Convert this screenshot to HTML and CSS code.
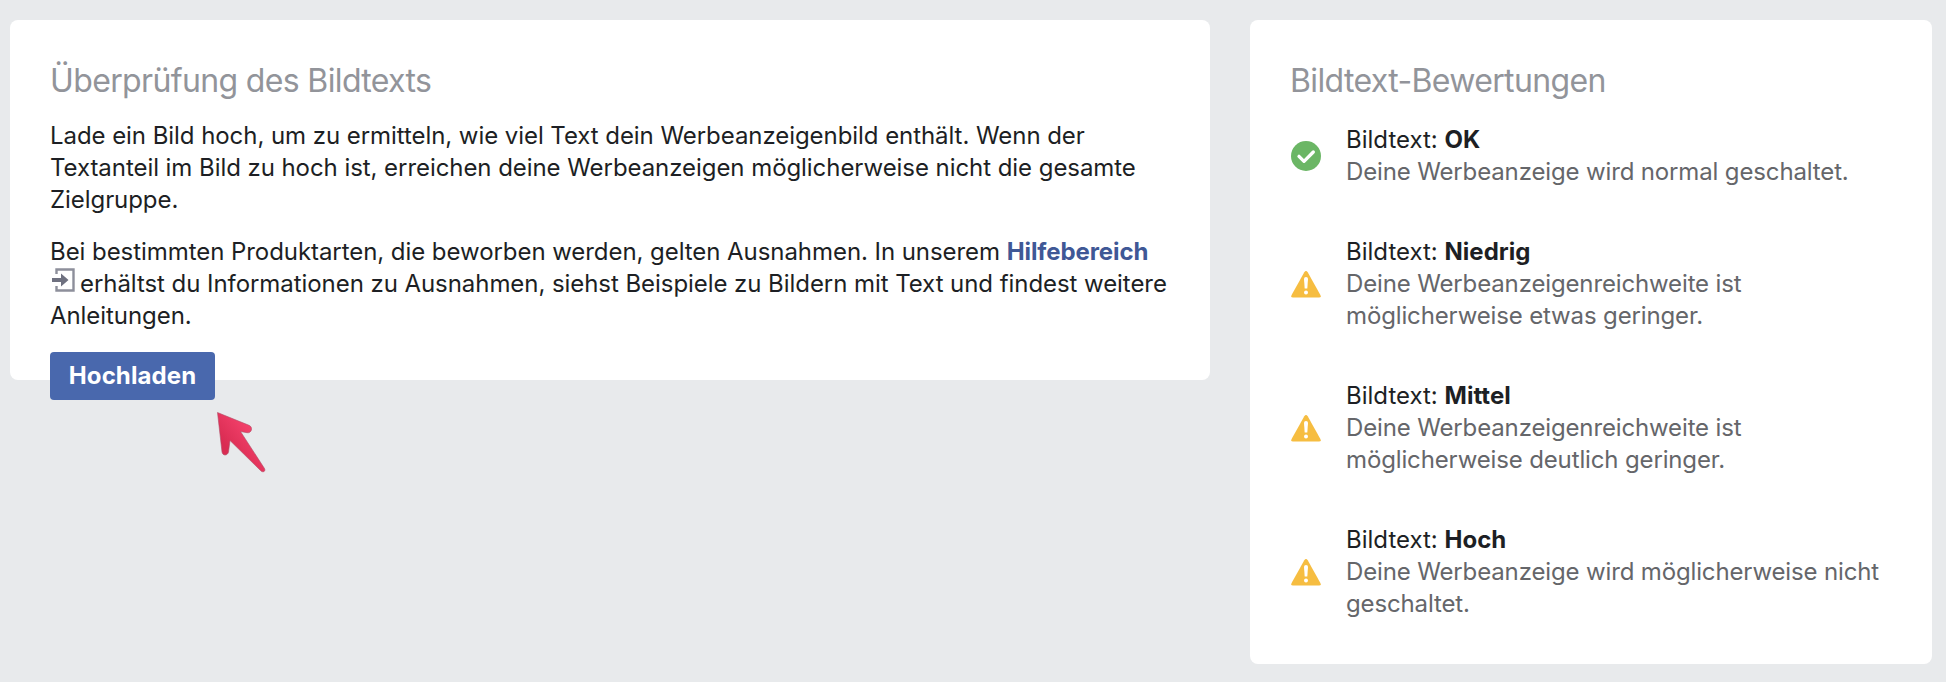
FILE: index.html
```
<!DOCTYPE html>
<html lang="de">
<head>
    <meta charset="UTF-8">
    <meta name="viewport" content="width=device-width, initial-scale=1.0">
    <title>Überprüfung des Bildtexts</title>
    <link rel="stylesheet" href="styles.css">
</head>
<body>

    <div class="container">
        <div class="card check">
            <h2>Überprüfung des Bildtexts</h2>
            <p>Lade ein Bild hoch, um zu ermitteln, wie viel Text dein Werbeanzeigenbild enthält. Wenn der<br>
            Textanteil im Bild zu hoch ist, erreichen deine Werbeanzeigen möglicherweise nicht die gesamte<br>
            Zielgruppe.</p>
            <p>Bei bestimmten Produktarten, die beworben werden, gelten Ausnahmen. In unserem <a href="#">Hilfebereich</a><br>
            <svg class="link-icon" viewBox="0 0 24 24"><path d="M5.5 6V1.5h17v21h-17V18" fill="none" stroke="#8d8f9b" stroke-width="2.4"/><path d="M1 10h9V5.500l7.500 6.500-7.500 6.500V14H1z" fill="#6f7180"/></svg>erhältst du Informationen zu Ausnahmen, siehst Beispiele zu Bildern mit Text und findest weitere<br>
            Anleitungen.</p>
            <button>Hochladen</button>
            <svg class="pointer" viewBox="0 0 50 62">
                <defs>
                    <linearGradient id="red" x1="0" y1="1" x2="1" y2="0">
                        <stop offset="0.3" stop-color="#d92c52"/>
                        <stop offset="0.7" stop-color="#f2406a"/>
                    </linearGradient>
                </defs>
                <path d="M1.500 1.500 33 14.300C37.500 16.200 35.500 22.500 31 21.700L24.500 20.500 48.500 57.500C50 60.500 46.500 62 44.500 59.500L14 29.500 12.500 41C11.500 45 6.500 45 6 41Z" fill="url(#red)" stroke="#b04c64" stroke-width="0.6"/>
            </svg>
        </div>

        <div class="card ratings">
            <h2>Bildtext-Bewertungen</h2>
            <div class="rating">
                <svg class="icon" viewBox="0 0 30 30"><circle cx="15" cy="15" r="15" fill="#6bb665"/><path d="M8 15.300l5 5L22.300 11" fill="none" stroke="#fff" stroke-width="3.300" stroke-linecap="round" stroke-linejoin="round"/></svg>
                <div>
                    <div class="label">Bildtext: <b>OK</b></div>
                    <div class="text">Deine Werbeanzeige wird normal geschaltet.</div>
                </div>
            </div>
            <div class="rating">
                <svg class="icon" viewBox="0 0 30 30"><path d="M13.300 3.200Q15 .8 16.700 3.200L29.400 26Q30.500 28.500 28 28.500H2Q-.5 28.500.6 26Z" fill="#f6bd41"/><path d="M13 10a2 2 0 0 1 4 0l-.7 9.500h-2.600z" fill="#fff"/><circle cx="15" cy="23.500" r="2" fill="#fff"/></svg>
                <div>
                    <div class="label">Bildtext: <b>Niedrig</b></div>
                    <div class="text">Deine Werbeanzeigenreichweite ist<br>möglicherweise etwas geringer.</div>
                </div>
            </div>
            <div class="rating">
                <svg class="icon" viewBox="0 0 30 30"><path d="M13.300 3.200Q15 .8 16.700 3.200L29.400 26Q30.500 28.500 28 28.500H2Q-.5 28.500.6 26Z" fill="#f6bd41"/><path d="M13 10a2 2 0 0 1 4 0l-.7 9.500h-2.600z" fill="#fff"/><circle cx="15" cy="23.500" r="2" fill="#fff"/></svg>
                <div>
                    <div class="label">Bildtext: <b>Mittel</b></div>
                    <div class="text">Deine Werbeanzeigenreichweite ist<br>möglicherweise deutlich geringer.</div>
                </div>
            </div>
            <div class="rating">
                <svg class="icon" viewBox="0 0 30 30"><path d="M13.300 3.200Q15 .8 16.700 3.200L29.400 26Q30.500 28.500 28 28.500H2Q-.5 28.500.6 26Z" fill="#f6bd41"/><path d="M13 10a2 2 0 0 1 4 0l-.7 9.500h-2.600z" fill="#fff"/><circle cx="15" cy="23.500" r="2" fill="#fff"/></svg>
                <div>
                    <div class="label">Bildtext: <b>Hoch</b></div>
                    <div class="text">Deine Werbeanzeige wird möglicherweise nicht<br>geschaltet.</div>
                </div>
            </div>
        </div>
    </div>

</body>
</html>
```

FILE: styles.css
```
* {
    box-sizing: border-box;
}

body {
    background-color: #e8eaec;
    color: #1d1f24;
    margin: 0;
    font-family: Inter, "Liberation Sans", sans-serif;
    font-size: 24px;
    line-height: 32px;
    letter-spacing: -0.14px;
}

.container {
    display: flex;
    align-items: flex-start;
    gap: 40px;
    padding: 20px 14px 18px 10px;
}

.card {
    background-color: white;
    border-radius: 8px;
    padding: 41px 40px 40px;
    white-space: nowrap;
}

.check {
    position: relative;
    width: 1200px;
    height: 360px; /* the button hangs over the bottom edge */
}

.ratings {
    width: 682px;
    height: 644px;
}

h2 {
    margin: 0 0 19px;
    color: #92949a;
    font-size: 32px;
    font-weight: 400;
    line-height: 40px;
    letter-spacing: -0.64px;
}

p {
    margin: 0 0 20px;
    letter-spacing: -0.06px;
}

a {
    color: #3f5896;
    font-weight: 700;
    letter-spacing: -0.1px;
    text-decoration: none;
}

.link-icon {
    width: 24px;
    height: 24px;
    margin: 0 5px 0 1px;
    vertical-align: 0;
}

button {
    display: block;
    width: 165px;
    height: 48px;
    padding: 0;
    border: none;
    border-radius: 4px;
    background-color: #4968ad;
    color: white;
    font: inherit;
    font-weight: 700;
    letter-spacing: 0.1px;
    cursor: pointer;
}

/* Arrow pointing at the upload button */
.pointer {
    position: absolute;
    left: 206px;
    top: 391px;
    width: 50px;
    height: 62px;
}

.ratings h2 {
    margin-bottom: 23px;
}

.rating {
    display: flex;
    align-items: center;
    gap: 25px;
    margin-bottom: 48px;
}

.icon {
    width: 30px;
    height: 30px;
    margin-left: 1px;
    flex: none;
}

.label {
    letter-spacing: 0;
}

.rating b {
    font-weight: 700;
}

.text {
    color: #65666a;
}
```
